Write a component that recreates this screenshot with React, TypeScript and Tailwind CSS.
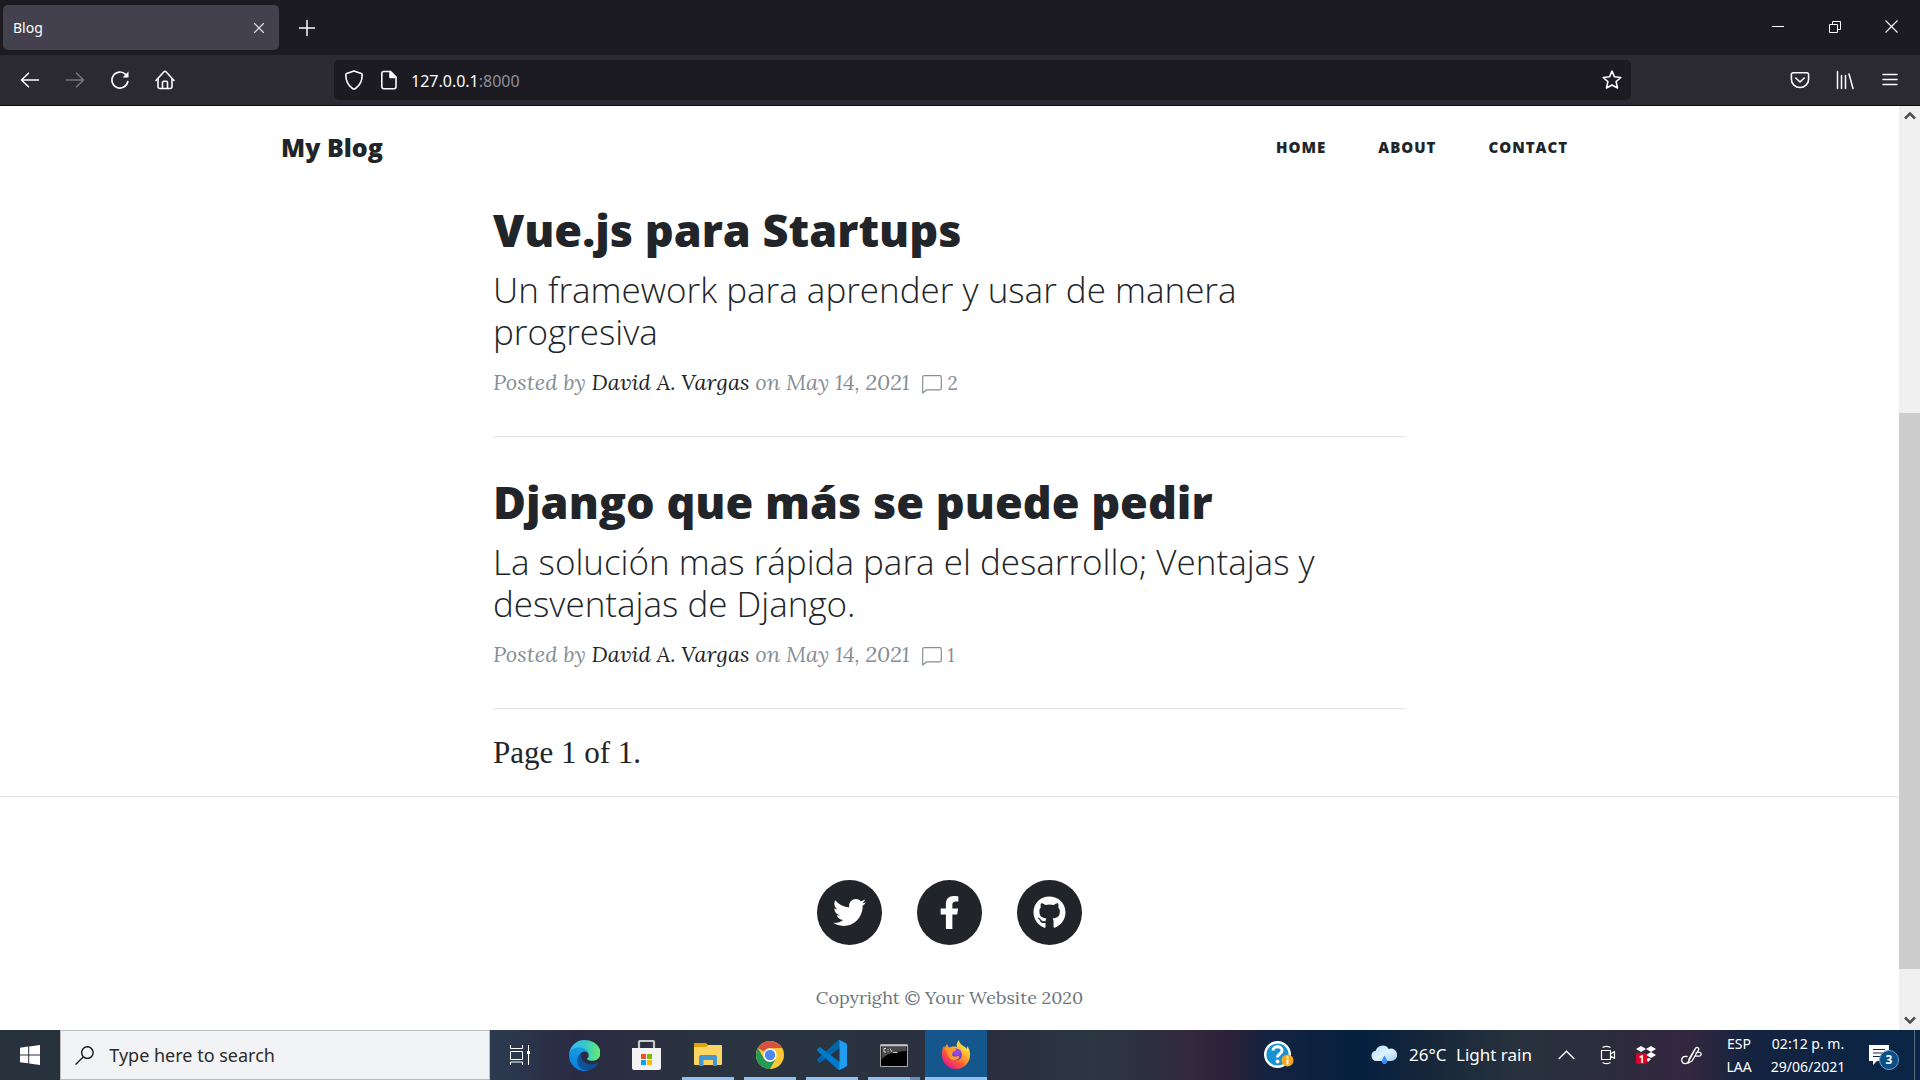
import type { ReactNode } from "react";
import { FaFacebookF, FaGithub, FaTwitter } from "react-icons/fa";

const line = { fill: "none", stroke: "currentColor", strokeLinecap: "round", strokeLinejoin: "round" } as const;

function Icon({ size = 20, width = 1.5, children }: { size?: number; width?: number; children: ReactNode }) {
  return (
    <svg width={size} height={size} viewBox="0 0 20 20" {...line} strokeWidth={width} aria-hidden="true">
      {children}
    </svg>
  );
}

function ChromeButton({ label, className, children }: { label: string; className: string; children: ReactNode }) {
  return (
    <button type="button" aria-label={label} className={`flex shrink-0 items-center justify-center ${className}`}>
      {children}
    </button>
  );
}

function TabStrip() {
  return (
    <div className="flex h-[55px] items-start bg-[#1c1b22] text-[#fbfbfe]">
      <div className="ml-[3px] mt-[5px] flex h-[45px] w-[276px] items-center justify-between rounded-[5px] bg-[#42414d] pl-[10px] pr-[10px]">
        <span className="font-['Noto_Sans','Open_Sans',sans-serif] text-[14px] leading-5">Blog</span>
        <ChromeButton label="Close tab" className="h-5 w-5">
          <Icon width={1.1}>
            <path d="M5.500 5.500l9 9M14.500 5.500l-9 9" opacity=".85" />
          </Icon>
        </ChromeButton>
      </div>
      <ChromeButton label="New tab" className="ml-2 h-[55px] w-10">
        <Icon width={1.5}>
          <path d="M10 2.500v15M2.500 10h15" />
        </Icon>
      </ChromeButton>
      <div className="ml-auto flex">
        <ChromeButton label="Minimize" className="h-[53px] w-[57px]">
          <svg width="12" height="12" viewBox="0 0 12 12" aria-hidden="true">
            <path d="M0 5.500h12" stroke="#fff" />
          </svg>
        </ChromeButton>
        <ChromeButton label="Restore" className="h-[53px] w-[57px]">
          <svg width="12" height="12" viewBox="0 0 12 12" fill="none" stroke="#fff" aria-hidden="true">
            <path d="M.5 3.500h8v8h-8zM3.500 3.500v-3h8v8h-3" />
          </svg>
        </ChromeButton>
        <ChromeButton label="Close window" className="h-[53px] w-[57px]">
          <svg width="13" height="13" viewBox="0 0 13 13" stroke="#fff" strokeWidth="1.1" aria-hidden="true">
            <path d="M.5.5l12 12M12.500.5l-12 12" />
          </svg>
        </ChromeButton>
      </div>
    </div>
  );
}

function Toolbar() {
  return (
    <div className="flex h-[51px] items-center border-b border-[#0c0c0d] bg-[#2b2a33] pl-[7px] pr-2 text-[#fbfbfe]">
      <ChromeButton label="Back" className="h-10 w-[45px]">
        <Icon width={1.6}>
          <path d="M18.500 10H1.500M8.500 3.200L1.500 10l7 6.800" />
        </Icon>
      </ChromeButton>
      <ChromeButton label="Forward" className="h-10 w-[45px] text-[#76757c]">
        <Icon width={1.6}>
          <path d="M1.500 10h17M11.500 3.200L18.500 10l-7 6.800" />
        </Icon>
      </ChromeButton>
      <ChromeButton label="Reload" className="h-10 w-[45px]">
        <Icon width={1.6}>
          <path d="M17.800 11.500A8 8 0 1 1 15.600 4.400" />
          <path d="M18.500 1.500v6h-6z" fill="currentColor" stroke="none" />
        </Icon>
      </ChromeButton>
      <ChromeButton label="Home" className="h-10 w-[45px]">
        <Icon width={1.6}>
          <path d="M1 10.500L9 1.700q1-1 2 0l8 8.800" />
          <path d="M3 9v7.500A2 2 0 0 0 5 18.500h10a2 2 0 0 0 2-2V9" />
          <path d="M7.500 18.500v-6A1.200 1.200 0 0 1 8.700 11.300h2.600a1.200 1.200 0 0 1 1.200 1.200v6" />
        </Icon>
      </ChromeButton>

      <div className="ml-[147px] mr-[146px] flex h-10 min-w-0 flex-1 items-center rounded-[5px] bg-[#1c1b22] pl-[10px] pr-[9px]">
        <Icon width={1.6}>
          <path d="M10 .9l7.300 2.600q.9.300.9 1.300c0 6-2.200 10.700-6.700 13.700q-1.500 1-3 0C4 15.500 1.800 10.800 1.800 4.800q0-1 .9-1.300z" />
        </Icon>
        <span className="ml-[15px] flex">
          <Icon width={1.6}>
            <path d="M4.700 1.500h6.800l5.500 5.500v9.800a1.900 1.900 0 0 1-1.900 1.900H4.700a1.900 1.900 0 0 1-1.900-1.900V3.400a1.900 1.900 0 0 1 1.900-1.900z" />
            <path d="M11 1.500v6h6z" fill="currentColor" />
          </Icon>
        </span>
        <div className="relative ml-3 mt-[2px] flex-1">
          <input
            aria-label="Address"
            defaultValue="127.0.0.1:8000"
            className="w-full bg-transparent font-['Noto_Sans','Open_Sans',sans-serif] text-[16px] leading-6 text-transparent outline-none"
          />
          <span
            aria-hidden="true"
            className="pointer-events-none absolute inset-0 font-['Noto_Sans','Open_Sans',sans-serif] text-[16px] leading-6 text-[#fbfbfe]"
          >
            127.0.0.1<span className="text-[#8f8f98]">:8000</span>
          </span>
        </div>
        <ChromeButton label="Bookmark this page" className="h-8 w-5">
          <Icon width={1.6}>
            <path d="M10 1.200l2.500 5.600 6.300.7-4.700 4.100 1.400 6.400L10 15l-5.500 3 1.400-6.400-4.700-4.100 6.300-.7z" />
          </Icon>
        </ChromeButton>
      </div>

      <ChromeButton label="Save to Pocket" className="h-10 w-[45px]">
        <Icon width={1.6}>
          <path d="M3.200 2.800h13.600a1.800 1.800 0 0 1 1.800 1.800v4.600a8.600 8.300 0 0 1-17.200 0V4.600a1.800 1.800 0 0 1 1.800-1.800z" />
          <path d="M5.800 8l4.200 4 4.200-4" />
        </Icon>
      </ChromeButton>
      <ChromeButton label="Library" className="h-10 w-[45px]">
        <Icon>
          <path d="M2.500 1.500v17M6.500 5.500v13M10.500 5.500v13M14 4l4 14.500" />
        </Icon>
      </ChromeButton>
      <ChromeButton label="Menu" className="h-10 w-[45px]">
        <Icon>
          <path d="M3 4.500h14M3 9.500h14M3 14.500h14" />
        </Icon>
      </ChromeButton>
    </div>
  );
}

const links = ["HOME", "ABOUT", "CONTACT"];

const posts = [
  {
    title: "Vue.js para Startups",
    subtitle: "Un framework para aprender y usar de manera progresiva",
    comments: 2,
  },
  {
    title: "Django que más se puede pedir",
    subtitle: "La solución mas rápida para el desarrollo; Ventajas y desventajas de Django.",
    comments: 1,
  },
];

function Post({ title, subtitle, comments }: { title: string; subtitle: string; comments: number }) {
  return (
    <article className="border-b border-[#e5e5e5] pb-9 not-first:pt-[38px]">
      <a href="#post" className="block font-['Open_Sans',sans-serif]">
        <h2 className="text-[45px] leading-[54px] font-extrabold">{title}</h2>
        <h3 className="mt-3 text-[35px] leading-[42px] font-light">{subtitle}</h3>
      </a>
      <p className="mt-[11px] flex items-center font-['Lora','Liberation_Serif',serif] text-[22px] leading-[34px] text-[#868e96]">
        <span className="italic">
          Posted by{" "}
          <a href="#author" className="text-[#212529]">
            David A. Vargas
          </a>{" "}
          on May 14, 2021
        </span>
        <svg className="ml-3 mt-1" width="20" height="19" viewBox="0 0 20 19" {...line} strokeWidth="1.2" aria-hidden="true">
          <path d="M.7 18V2.200A1.500 1.500 0 0 1 2.200.7h15.600a1.500 1.500 0 0 1 1.500 1.500v11.100a1.500 1.500 0 0 1-1.500 1.500H4.500z" />
        </svg>
        <span className="ml-[6px] mt-[2px] text-[19px]">{comments}</span>
      </p>
    </article>
  );
}

function BlogPage() {
  return (
    <div className="min-w-0 flex-1 overflow-hidden bg-white text-[#212529]">
      <nav className="mx-auto flex h-[82px] max-w-[1337px] items-center justify-between pr-6 font-['Open_Sans',sans-serif] font-extrabold">
        <a href="#top" className="text-[25px] leading-9">
          My Blog
        </a>
        <ul className="flex">
          {links.map((l) => (
            <li key={l}>
              <a href={`#${l.toLowerCase()}`} className="px-[26px] text-[15px] leading-6 tracking-[1px]">
                {l}
              </a>
            </li>
          ))}
        </ul>
      </nav>
      <main className="mx-auto max-w-[913px] pt-[15px]">
        <div>
          {posts.map((p) => (
            <Post key={p.title} {...p} />
          ))}
        </div>
        <p className="pt-[21px] pb-5 font-['Liberation_Serif',serif] text-[31px] leading-[46px]">Page 1 of 1.</p>
      </main>
      <footer className="flex flex-col items-center border-t border-[#e5e5e5] pt-[83px]">
        <div className="flex gap-[35px] text-white">
          <a href="#twitter" aria-label="Twitter" className="flex h-[65px] w-[65px] items-center justify-center rounded-full bg-[#212529]">
            <FaTwitter size={33} />
          </a>
          <a href="#facebook" aria-label="Facebook" className="flex h-[65px] w-[65px] items-center justify-center rounded-full bg-[#212529]">
            <FaFacebookF size={33} />
          </a>
          <a href="#github" aria-label="GitHub" className="flex h-[65px] w-[65px] items-center justify-center rounded-full bg-[#212529]">
            <FaGithub size={33} />
          </a>
        </div>
        <p className="mt-10 font-['Lora','Liberation_Serif',serif] text-[18px] leading-[26px] text-[#6c757d]">
          Copyright © Your Website 2020
        </p>
      </footer>
    </div>
  );
}

function Scrollbar() {
  return (
    <div className="flex w-[21px] shrink-0 flex-col items-center bg-[#f0f0f0] text-[#505050]">
      <button type="button" aria-label="Scroll up" className="flex h-[19px] w-full items-center justify-center">
        <svg width="12" height="9" viewBox="0 0 12 9" fill="none" stroke="currentColor" strokeWidth="2.500" aria-hidden="true">
          <path d="M1 7.500l5-5 5 5" />
        </svg>
      </button>
      <div className="flex w-full flex-1 flex-col">
        <div className="flex-[288]" />
        <div className="flex-[556] bg-[#cdcdcd]" />
        <div className="flex-[42]" />
      </div>
      <button type="button" aria-label="Scroll down" className="flex h-[19px] w-full items-center justify-center">
        <svg width="12" height="9" viewBox="0 0 12 9" fill="none" stroke="currentColor" strokeWidth="2.500" aria-hidden="true">
          <path d="M1 1.500l5 5 5-5" />
        </svg>
      </button>
    </div>
  );
}

function WindowsLogo() {
  return (
    <svg width="20" height="20" viewBox="0 0 20 20" fill="#fff" aria-hidden="true">
      <path d="M0 2.700L8.200 1.600V9.400H0zM9.200 1.400L20 0v9.400H9.200zM0 10.400h8.200v7.900L0 17.200zM9.200 10.400H20V20L9.200 18.500z" />
    </svg>
  );
}

function TaskViewIcon() {
  return (
    <svg width="20" height="20" viewBox="0 0 20 20" fill="none" stroke="#fff" strokeWidth="1" aria-hidden="true">
      <path d="M.5 0v3.500h12V0M.5 6.500h12v8H.5zM.5 20v-3h12v3M18.500 0v20" />
      <path d="M17 6h3v3h-3z" fill="#fff" stroke="none" />
    </svg>
  );
}

function EdgeIcon() {
  return (
    <svg width="31" height="31" viewBox="0 0 256 256" aria-hidden="true">
      <defs>
        <linearGradient id="edgeBase" x1="60" y1="178" x2="240" y2="178" gradientUnits="userSpaceOnUse">
          <stop offset="0" stopColor="#0c59a4" />
          <stop offset="1" stopColor="#114a8b" />
        </linearGradient>
        <linearGradient id="edgeMid" x1="140" y1="90" x2="50" y2="230" gradientUnits="userSpaceOnUse">
          <stop offset="0" stopColor="#1b9de2" />
          <stop offset="1" stopColor="#0883dc" />
        </linearGradient>
        <linearGradient id="edgeTop" x1="10" y1="80" x2="256" y2="100" gradientUnits="userSpaceOnUse">
          <stop offset="0" stopColor="#35b8f1" />
          <stop offset=".5" stopColor="#36c9c9" />
          <stop offset="1" stopColor="#66eb6e" />
        </linearGradient>
      </defs>
      <path fill="url(#edgeBase)" d="M231 190c-4 2-7 3-11 5a102 102 0 0 1-36 6c-47 0-88-32-88-74 0-11 6-22 17-28-43 2-54 47-54 73 0 75 69 82 84 82 8 0 20-2 28-5l1 0a128 128 0 0 0 66-53 4 4 0 0 0-7-6z" />
      <path fill="url(#edgeMid)" d="M106 241a79 79 0 0 1-23-21 81 81 0 0 1 30-122c3-2 9-4 16-4a33 33 0 0 1 27 13 33 33 0 0 1 6 19c0 0 26-80-81-80C36 46 0 89 0 126a130 130 0 0 0 12 56 128 128 0 0 0 156 67 75 75 0 0 1-62-8z" />
      <path fill="url(#edgeTop)" d="M152 149c-1 1-3 3-3 6 0 3 2 6 5 8 15 11 44 9 44 9a61 61 0 0 0 31-9 62 62 0 0 0 31-54c0-23-8-38-11-44C228 23 181 0 128 0A128 128 0 0 0 0 126C1 90 37 60 81 60c4 0 24 0 43 10 17 9 26 20 32 30 6 11 7 25 7 30 0 6-2 13-11 19z" />
    </svg>
  );
}

function StoreIcon() {
  return (
    <svg width="29" height="30" viewBox="0 0 29 30" aria-hidden="true">
      <path d="M7 9V2q0-1 1-1h13q1 0 1 1v7" fill="none" stroke="#c9c9c9" strokeWidth="2.200" />
      <path d="M0 8h29v20q0 2-2 2H2q-2 0-2-2z" fill="#f3f3f3" />
      <path d="M9 14h5v5H9z" fill="#f25022" />
      <path d="M15 14h5v5h-5z" fill="#7fba00" />
      <path d="M9 20h5v5H9z" fill="#00a4ef" />
      <path d="M15 20h5v5h-5z" fill="#ffb900" />
    </svg>
  );
}

function FolderIcon() {
  return (
    <svg width="28" height="24" viewBox="0 0 28 24" aria-hidden="true">
      <path d="M0 1q0-1 1-1h11l2 2v4H0z" fill="#e3a008" />
      <path d="M0 4h12l2-2h13q1 0 1 1v18q0 1-1 1H1q-1 0-1-1z" fill="#fcd462" />
      <path d="M5 23V14q0-2 2-2h14q2 0 2 2v9h-4v-6H9.500v6z" fill="#3f97d6" />
    </svg>
  );
}

function ChromeIcon() {
  return (
    <svg width="28" height="28" viewBox="0 0 28 28" aria-hidden="true">
      <circle cx="14" cy="14" r="14" fill="#fcc934" />
      <path d="M1.900 7A14 14 0 0 1 26.100 7H14a7 7 0 0 0-6 3.500z" fill="#d94f43" />
      <path d="M1.900 7A14 14 0 0 0 14 28l6-10.500a7 7 0 0 1-12.100 0z" fill="#229a58" />
      <circle cx="14" cy="14" r="6.600" fill="#fff" />
      <circle cx="14" cy="14" r="5.200" fill="#4a87ee" />
    </svg>
  );
}

function CodeIcon() {
  return (
    <svg width="30" height="30" viewBox="0 0 100 100" aria-hidden="true">
      <path d="M96.500 10.800L75.900.9a6.200 6.200 0 0 0-7.100 1.200L1.300 63.600a4.200 4.200 0 0 0 0 6.200l5.500 5a4.200 4.200 0 0 0 5.300.2L93.400 13.400A4.100 4.100 0 0 1 100 16.700v-.3a6.200 6.200 0 0 0-3.500-5.600z" fill="#0065a9" />
      <path d="M96.500 89.200l-20.600 9.900a6.200 6.200 0 0 1-7.100-1.200L1.300 36.400a4.200 4.200 0 0 1 0-6.200l5.500-5a4.200 4.200 0 0 1 5.300-.2l81.300 61.600a4.100 4.100 0 0 0 6.600-3.300v.3a6.200 6.200 0 0 1-3.500 5.600z" fill="#007acc" />
      <path d="M75.900 99.100a6.200 6.200 0 0 1-7.100-1.200c2.300 2.300 6.200.7 6.200-2.600V4.700c0-3.300-3.900-4.900-6.200-2.600a6.200 6.200 0 0 1 7.100-1.200l20.600 9.900A6.200 6.200 0 0 1 100 16.400v67.200a6.200 6.200 0 0 1-3.500 5.600z" fill="#1f9cf0" />
    </svg>
  );
}

function TerminalIcon() {
  return (
    <svg width="28" height="23" viewBox="0 0 28 23" aria-hidden="true">
      <path d="M.5.500h27v22H.5z" fill="#000" stroke="#a8a8a8" />
      <path d="M1 1h26v1.500H1z" fill="#c8c8c8" />
      <path d="M1.500 3h25v4Q6 8 1.500 16z" fill="#4a4a4a" />
      <path d="M6 4.500H4v3.500h2M8 5v.8M8 7.200V8M10 4.500l2 3.500M13 8.500h4.500" stroke="#ddd" fill="none" strokeWidth=".9" />
    </svg>
  );
}

function FirefoxIcon() {
  return (
    <svg width="30" height="30" viewBox="0 0 30 30" aria-hidden="true">
      <defs>
        <linearGradient id="foxBody" x1="25" y1="3" x2="6" y2="27" gradientUnits="userSpaceOnUse">
          <stop offset="0" stopColor="#fff44f" />
          <stop offset=".35" stopColor="#ffb02e" />
          <stop offset=".65" stopColor="#ff5a36" />
          <stop offset="1" stopColor="#e5158b" />
        </linearGradient>
        <radialGradient id="foxGlobe" cx=".6" cy=".3" r=".8">
          <stop offset="0" stopColor="#a14af0" />
          <stop offset="1" stopColor="#4b3bb8" />
        </radialGradient>
      </defs>
      <path d="M18 0c-2 2-3 5-2 7-4-1-7 0-8 1L6 4C5 5 4 7 4 8L3 6C1 9 1 12 1 15a14 14 0 0 0 28 0c0-4-1-7-3-9l0 3C24 6 18 5 18 0z" fill="url(#foxBody)" />
      <circle cx="15" cy="14.500" r="6" fill="url(#foxGlobe)" />
      <path d="M4 8c2-1 5-1 7 1l4 0c0 2-2 2-3 3-1 1 0 2-1 3 1 2 4 2 6 1 1 0 2 1 1 2-3 4-10 2-11-3-1-3-2-5-3-7z" fill="#ff9a2b" />
    </svg>
  );
}

type TaskbarApp = { name: string; icon: ReactNode; state?: "open" | "multi" | "active" };

const apps: TaskbarApp[] = [
  { name: "Edge", icon: <EdgeIcon /> },
  { name: "Store", icon: <StoreIcon /> },
  { name: "Files", icon: <FolderIcon />, state: "open" },
  { name: "Chrome", icon: <ChromeIcon />, state: "open" },
  { name: "Code", icon: <CodeIcon />, state: "open" },
  { name: "Terminal", icon: <TerminalIcon />, state: "multi" },
  { name: "Firefox", icon: <FirefoxIcon />, state: "active" },
];

function HelpIcon() {
  return (
    <svg width="30" height="28" viewBox="0 0 30 28" aria-hidden="true">
      <circle cx="13.500" cy="13.500" r="12.300" fill="#1793d1" stroke="#fff" strokeWidth="2.400" />
      <path d="M9 9.500c0-5 9-5 9 0 0 3.500-4.500 3-4.500 7" fill="none" stroke="#fff" strokeWidth="3" />
      <circle cx="13.500" cy="20.500" r="1.900" fill="#fff" />
      <circle cx="23.500" cy="19.500" r="6" fill="#f5a81c" />
      <path d="M23.500 18.500v5M23.500 15.500v1.800" stroke="#fff" strokeWidth="2" />
    </svg>
  );
}

function WeatherIcon() {
  return (
    <svg width="26" height="20" viewBox="0 0 26 20" aria-hidden="true">
      <defs>
        <linearGradient id="cloud" x1="0" y1="0" x2="1" y2="1">
          <stop offset="0" stopColor="#a9dcff" />
          <stop offset=".5" stopColor="#e2f3ff" />
          <stop offset="1" stopColor="#9fcdf5" />
        </linearGradient>
      </defs>
      <path d="M5.500 16a5.200 5.200 0 0 1-.8-10.300A7.300 7.300 0 0 1 17.800 4 6.200 6.200 0 1 1 19.500 16z" fill="url(#cloud)" />
      <path d="M13.500 10.500c1.500 2.500 2.700 4 2.700 5.800a2.700 2.700 0 0 1-5.400 0c0-1.800 1.200-3.300 2.700-5.800z" fill="#3f8ff0" />
    </svg>
  );
}

function Taskbar() {
  return (
    <footer className="flex h-[50px] shrink-0 items-stretch bg-[linear-gradient(90deg,#27323d_0%,#27323d_22%,#2b3a4f_26%,#2a2b42_30%,#2a3340_36%,#2a3340_44%,#2a2f40_52%,#2b3742_57%,#2d2f40_60%,#33283d_62%,#2a2238_64%,#14233f_66%,#06203f_71%,#15263a_74%,#27323d_79%,#2c2b3c_84%,#33273f_88%,#14233f_91%,#0a2547_100%)] font-['Noto_Sans','Open_Sans',sans-serif] text-white">
      <button type="button" aria-label="Start" className="flex w-[60px] shrink-0 items-center justify-center">
        <WindowsLogo />
      </button>
      <label className="flex w-[430px] shrink items-center border border-[#b9bbbd] bg-[#f2f3f5] pl-[14px] text-[#1f1f1f]">
        <svg width="21" height="21" viewBox="0 0 21 21" fill="none" stroke="#111" strokeWidth="1.500" aria-hidden="true">
          <circle cx="13.500" cy="7.300" r="6.300" />
          <path d="M9 12L.7 20.300" />
        </svg>
        <input
          aria-label="Type here to search"
          placeholder="Type here to search"
          className="ml-[15px] w-full min-w-0 bg-transparent text-[18px] leading-6 outline-none placeholder:text-[#2b2b2b]"
        />
      </label>
      <button type="button" aria-label="Task view" className="mr-[3px] flex w-[60px] shrink-0 items-center justify-center">
        <TaskViewIcon />
      </button>
      {apps.map((a) => (
        <button
          type="button"
          key={a.name}
          aria-label={a.name}
          className={`relative flex w-[62px] shrink-0 items-center justify-center ${a.state === "active" ? "bg-[#15568d]" : ""}`}
        >
          {a.icon}
          {a.state && (
            <span className={`absolute bottom-0 h-[3px] bg-[#8fc0ee] ${a.state === "active" ? "inset-x-0" : "inset-x-[5px]"}`}>
              {a.state === "multi" && <span className="absolute right-0 h-[3px] w-[10px] bg-[#6b8fb8]" />}
            </span>
          )}
        </button>
      ))}

      <div className="ml-auto flex shrink-0 items-center">
        <button type="button" aria-label="Help" className="mr-[77px]">
          <HelpIcon />
        </button>
        <button type="button" className="flex items-center text-[17px] leading-6 whitespace-nowrap">
          <WeatherIcon />
          <span className="ml-3 w-[47px] text-left">26°C</span>
          <span className="w-[75px] text-left">Light rain</span>
        </button>
        <button type="button" aria-label="Show hidden icons" className="ml-[27px]">
          <svg width="17" height="10" viewBox="0 0 17 10" fill="none" stroke="#fff" strokeWidth="1.400" aria-hidden="true">
            <path d="M.7 9l7.800-7.800L16.300 9" />
          </svg>
        </button>
        <button type="button" aria-label="Meet now" className="ml-[25px]">
          <svg width="16" height="20" viewBox="0 0 16 20" {...line} strokeWidth="1.200" aria-hidden="true">
            <path d="M3 2.300q3.500-2 7 0M3 17.700q3.500 2 7 0M1.500 5.500h9v9h-9zM10.500 9l4-2.500v7l-4-2.500" />
          </svg>
        </button>
        <button type="button" aria-label="Dropbox, 1 notification" className="relative ml-5 h-5 w-5">
          <svg width="20" height="20" viewBox="0 0 20 20" fill="#fff" aria-hidden="true">
            <path d="M5 1l5 3-5 3-5-3zM15 1l5 3-5 3-5-3zM15 7l5 3-5 3-5-3zM10 14l3-1 2 1-3 3z" />
          </svg>
          <span className="absolute left-0 top-[8px] flex h-[11px] w-[11px] items-center justify-center rounded-xs bg-[#e0002a] text-[10px] leading-none font-bold">
            1
          </span>
        </button>
        <button type="button" aria-label="Windows Ink" className="ml-[25px]">
          <svg width="21" height="20" viewBox="0 0 21 20" {...line} strokeWidth="1.300" aria-hidden="true">
            <path d="M6 11.500c-4-1-6 2-5 5 1 3 6 3 7-1l6.500-12c1-2 4-1 3 1.500L11 16l-3.500 2 .5-4 6-10M15 8c3-2 6 0 5 2s-4 1-6 1" />
          </svg>
        </button>
        <button type="button" className="ml-[23px] w-7 text-center text-[14px] leading-[23px]">
          ESP
          <br />
          LAA
        </button>
        <button type="button" className="ml-[14px] w-[82px] text-center text-[14px] leading-[23px] whitespace-nowrap">
          02:12 p. m.
          <br />
          29/06/2021
        </button>
        <button type="button" aria-label="3 notifications" className="relative ml-5 mr-[15px] h-[30px] w-[30px]">
          <svg width="20" height="20" viewBox="0 0 20 20" aria-hidden="true">
            <path d="M0 0h20v16H8l-4 4v-4H0z" fill="#fff" />
            <path d="M4 4.500h12M4 8h12M4 11.500h8" stroke="#14233f" strokeWidth="1.200" />
          </svg>
          <span className="absolute right-0 bottom-0 flex h-5 w-5 items-center justify-center rounded-full border border-[#6aa5d0] bg-[#0b4f86] text-[12px] leading-none font-bold">
            3
          </span>
        </button>
        <span className="mr-[5px] h-[50px] w-px bg-[#5a6b80]" />
      </div>
    </footer>
  );
}

export default function App() {
  return (
    <div className="flex h-screen flex-col overflow-hidden">
      <TabStrip />
      <Toolbar />
      <div className="flex min-h-0 flex-1">
        <BlogPage />
        <Scrollbar />
      </div>
      <Taskbar />
    </div>
  );
}
